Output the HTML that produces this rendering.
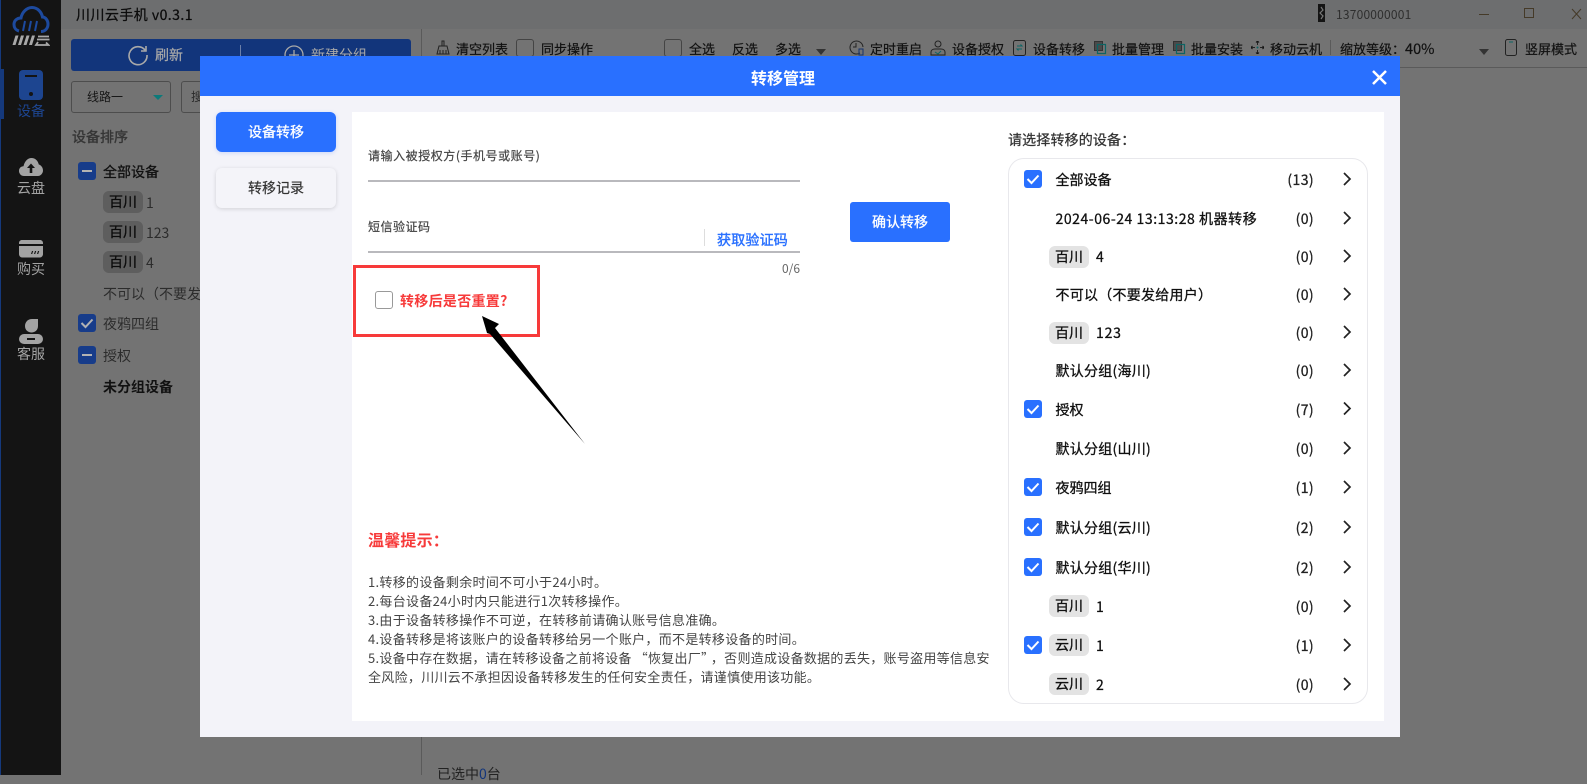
<!DOCTYPE html>
<html lang="zh"><head><meta charset="utf-8"><title>转移管理</title>
<style>
*{box-sizing:border-box}
html,body{margin:0;padding:0}
body{width:1587px;height:775px;overflow:hidden;position:relative;background:#737373;font-family:"Noto Sans CJK SC","Liberation Sans",sans-serif;font-size:14px;color:#111}
.a{position:absolute}
.t{position:absolute;white-space:nowrap;height:20px;line-height:20px}
.c{text-align:center}
.cb{position:absolute;width:18px;height:18px;border-radius:3px;background:#2970ff}
.cb svg{display:block}
.dcb{background:#173c8a}
.tag{position:absolute;width:40px;height:22px;line-height:22px;border-radius:6px;text-align:center;white-space:nowrap}
.tb{font-size:13px;color:#111;-webkit-text-stroke:.2px #111}
.box{position:absolute;width:18px;height:18px;border:1px solid #444;border-radius:3px}
.m{font-size:14px;color:#111;-webkit-text-stroke:.3px #111}
.r{letter-spacing:.25px}
.n{position:absolute;right:273px;white-space:nowrap;height:20px;line-height:20px;color:#222;letter-spacing:.4px;-webkit-text-stroke:.3px #222}
.h{position:absolute;left:368px;font-size:13px;height:19px;line-height:19px;color:#444;white-space:nowrap;letter-spacing:.3px}
.l{font-size:12px;color:#444;letter-spacing:.5px;-webkit-text-stroke:.2px #444}
</style></head><body>

<!-- top bar -->
<div class="a" style="left:61px;top:0;width:1526px;height:29px;background:#6d6e6f"></div>
<div class="t" style="left:76px;top:5px;font-size:14px;color:#0c0c0c;letter-spacing:.45px;-webkit-text-stroke:.25px #0c0c0c">川川云手机 v0.3.1</div>
<svg class="a" style="left:1318px;top:4px" width="7" height="18"><rect width="7" height="18" fill="#141414"/><path d="M3 3L5 6L2 9L5 12L3 15" stroke="#777" stroke-width="1.200" fill="none"/></svg>
<div class="t" style="left:1336px;top:5px;font-size:12px;color:#2e2e2e;letter-spacing:.2px">13700000001</div>
<svg class="a" style="left:1470px;top:0" width="117" height="26" fill="none" stroke="#453a28" stroke-width="1"><path d="M9 14.500H19M54.500 8.500H63.500V17.500H54.500ZM102 9L111 19M111 9L102 19"/></svg>

<!-- sidebar -->
<div class="a" style="left:0;top:0;width:61px;height:775px;background:#141414"></div>
<div class="a" style="left:0;top:0;width:1px;height:775px;background:#15397c"></div>
<div class="a" style="left:0;top:69px;width:4px;height:50px;background:#15397c"></div>
<svg class="a" style="left:12px;top:5px" width="38" height="42" fill="none">
<path d="M7 26C3 25 2 21.500 2 19.500C2 15.500 5 13 9 13C10 7 15 2.500 20 2.500C25.500 2.500 29.500 7 30.500 12C33.500 12 36 15.500 36 19C36 23.500 33 26.500 29 26.500" stroke="#1d4a9e" stroke-width="3"/>
<path d="M11 26L13 16M17 26L19 16M23 26L25 16" stroke="#1d4a9e" stroke-width="2"/>
<path d="M0.500 40L3.500 30.500H6.500L3.500 40ZM6 40L9 30.500H12L9 40ZM11.500 40L14.500 30.500H17.500L14.500 40ZM17 40L20 30.500H23L20 40Z" fill="#a8a8a8"/>
<path d="M26 31.500H37M25 34.500H37.500M26 37L24 40H36.500L34 37.500" stroke="#a8a8a8" stroke-width="1.800"/>
</svg>
<div class="a" style="left:19px;top:70px;width:24px;height:30px;background:#1d4590;border-radius:4px"></div>
<div class="a" style="left:25px;top:75px;width:12px;height:2px;background:#141414"></div>
<div class="a" style="left:29px;top:92px;width:4px;height:4px;border-radius:50%;background:#141414"></div>
<div class="t c" style="left:0;width:62px;top:101px;color:#1d4590;font-size:14px">设备</div>
<svg class="a" style="left:19px;top:158px" width="24" height="18"><path d="M5 18C2 18 0 15.500 0 13C0 10 2 8.500 4.500 8.300C5.500 3.500 8.500 0 12.500 0C16.500 0 19 3 19.800 6.500C22 7 24 9.500 24 12.500C24 15.500 21.500 18 19 18Z" fill="#a3a3a3"/><path d="M12 5.500L8 10H10.700V15H13.300V10H16Z" fill="#141414"/></svg>
<div class="t c" style="left:0;width:62px;top:178px;color:#a3a3a3">云盘</div>
<svg class="a" style="left:19px;top:240px" width="24" height="18"><path d="M3 0H21C22.700 0 24 1.300 24 3V4H0V3C0 1.300 1.300 0 3 0ZM0 6H24V14C24 16 22.500 17.500 21 17.500H3C1.500 17.500 0 16 0 14Z" fill="#a3a3a3"/><path d="M12 14L13 11H14.200L13.200 14ZM15 14L16 11H17.200L16.200 14ZM18 14L19 11H20.200L19.200 14Z" fill="#141414"/></svg>
<div class="t c" style="left:0;width:62px;top:259px;color:#a3a3a3">购买</div>
<svg class="a" style="left:19px;top:319px" width="24" height="25"><path d="M19 0V7C19 11 16 13.500 12.500 13.500C9 13.500 6 11 6 7C6 3 9 0 13 0Z" fill="#a3a3a3"/><rect y="15" width="24" height="10" rx="5" fill="#a3a3a3"/><rect x="8" y="19" width="8" height="2" fill="#141414"/></svg>
<div class="t c" style="left:0;width:62px;top:344px;color:#a3a3a3">客服</div>

<!-- left panel -->
<div class="a" style="left:71px;top:39px;width:340px;height:32px;background:#12357b;border-radius:3px"></div>
<svg class="a" style="left:127px;top:44px" width="22" height="22" fill="none" stroke="#a9a9a9" stroke-width="1.600"><path d="M18 6A9 9 0 1 0 20 11M19 2V7H14"/></svg>
<div class="t" style="left:155px;top:45px;color:#a9a9a9;-webkit-text-stroke:.2px #a9a9a9">刷新</div>
<div class="a" style="left:240px;top:45px;width:1px;height:20px;background:#6b7fa8"></div>
<svg class="a" style="left:284px;top:45px" width="20" height="20" fill="none" stroke="#a9a9a9" stroke-width="1.300"><circle cx="10" cy="10" r="9"/><path d="M5 10H15M10 5V15"/></svg>
<div class="t" style="left:311px;top:45px;color:#a9a9a9">新建分组</div>

<div class="a" style="left:71px;top:81px;width:100px;height:32px;border:1px solid #4d4d4d;border-radius:3px"></div>
<div class="t" style="left:87px;top:87px;font-size:12px;color:#161616">线路一</div>
<div class="a" style="left:153px;top:95px;width:0;height:0;border:5px solid transparent;border-top:5px solid #0d7a7a;border-bottom:0"></div>
<div class="a" style="left:181px;top:81px;width:60px;height:32px;border:1px solid #4d4d4d;border-radius:3px"></div>
<div class="t" style="left:191px;top:87px;font-size:12px;color:#2a2a2a">搜</div>

<div class="t" style="left:72px;top:127px;color:#363636;-webkit-text-stroke:.4px #363636">设备排序</div>
<div class="cb dcb" style="left:78px;top:162px"><svg width="18" height="18"><path d="M4 9H14" stroke="#b3b3b3" stroke-width="2"/></svg></div>
<div class="t" style="left:103px;top:162px;color:#111;-webkit-text-stroke:.3px #111">全部设备</div>
<div class="tag" style="left:103px;top:191px;background:#5e5e5e;color:#0c0c0c;-webkit-text-stroke:.3px #0c0c0c">百川</div><div class="t" style="left:146px;top:193px;color:#2c2c2c">1</div>
<div class="tag" style="left:103px;top:221px;background:#5e5e5e;color:#0c0c0c;-webkit-text-stroke:.3px #0c0c0c">百川</div><div class="t" style="left:146px;top:223px;color:#2c2c2c">123</div>
<div class="tag" style="left:103px;top:251px;background:#5e5e5e;color:#0c0c0c;-webkit-text-stroke:.3px #0c0c0c">百川</div><div class="t" style="left:146px;top:253px;color:#2c2c2c">4</div>
<div class="t" style="left:103px;top:284px;color:#2c2c2c">不可以（不要发给用户）</div>
<div class="cb dcb" style="left:78px;top:314px"><svg width="18" height="18" fill="none"><path d="M3.500 9L7.500 13L14.500 5.500" stroke="#b3b3b3" stroke-width="2"/></svg></div>
<div class="t" style="left:103px;top:314px;color:#2c2c2c">夜鸦四组</div>
<div class="cb dcb" style="left:78px;top:346px"><svg width="18" height="18"><path d="M4 9H14" stroke="#b3b3b3" stroke-width="2"/></svg></div>
<div class="t" style="left:103px;top:346px;color:#2c2c2c">授权</div>
<div class="t" style="left:103px;top:377px;color:#111;font-weight:700;font-size:14px">未分组设备</div>

<!-- toolbar -->
<div class="a" style="left:421px;top:29px;width:1px;height:746px;background:#5a5a5a"></div>
<div class="a" style="left:421px;top:67px;width:1166px;height:1px;background:#5a5a5a"></div>
<svg class="a" style="left:436px;top:40px" width="14" height="16" fill="none" stroke="#222" stroke-width="1"><path d="M6 1H8V6H6ZM3 6H11L13 14H1ZM4 10V14M7 10V14M10 10V14"/></svg>
<div class="t tb" style="left:456px;top:39px">清空列表</div>
<div class="box" style="left:516px;top:39px"></div>
<div class="t tb" style="left:541px;top:39px">同步操作</div>
<div class="box" style="left:664px;top:39px"></div>
<div class="t tb" style="left:689px;top:39px">全选</div>
<div class="t tb" style="left:732px;top:39px">反选</div>
<div class="t tb" style="left:775px;top:39px">多选</div>
<div class="a" style="left:816px;top:49px;width:0;height:0;border:5px solid transparent;border-top:6px solid #333;border-bottom:0"></div>
<svg class="a" style="left:849px;top:40px" width="16" height="16" fill="none" stroke="#222"><path d="M11 13A6.500 6.500 0 1 1 14 7M7 3V7H4"/><rect x="10" y="9" width="4" height="6" stroke="#14336e"/></svg>
<div class="t tb" style="left:870px;top:39px">定时重启</div>
<svg class="a" style="left:930px;top:40px" width="16" height="16" fill="none" stroke="#222"><circle cx="8" cy="4" r="3"/><path d="M1 15V12C1 10 3 9 5 9H11C13 9 15 10 15 12V15Z"/><path d="M5 12L8 14L11 11" stroke="#0d6464"/></svg>
<div class="t tb" style="left:952px;top:39px">设备授权</div>
<svg class="a" style="left:1013px;top:40px" width="14" height="16" fill="none" stroke="#222"><rect x=".5" y=".5" width="12" height="15" rx="2"/><path d="M4 6H9L7.500 4.500M9 9H4L5.500 10.500" stroke="#0d6464"/></svg>
<div class="t tb" style="left:1033px;top:39px">设备转移</div>
<svg class="a" style="left:1094px;top:41px" width="13" height="14" fill="none"><rect x=".5" y=".5" width="8" height="9" stroke="#333" fill="#4a4a4a"/><rect x="3.500" y="3.500" width="8" height="9" stroke="#0d6464" stroke-width="1.200"/></svg>
<div class="t tb" style="left:1112px;top:39px">批量管理</div>
<svg class="a" style="left:1173px;top:41px" width="13" height="14" fill="none"><rect x=".5" y=".5" width="8" height="9" stroke="#333" fill="#4a4a4a"/><rect x="3.500" y="3.500" width="8" height="9" stroke="#0d6464" stroke-width="1.200"/></svg>
<div class="t tb" style="left:1191px;top:39px">批量安装</div>
<svg class="a" style="left:1251px;top:41px" width="13" height="13" fill="none" stroke="#111"><path d="M6.500 0V4M6.500 9V13M0 6.500H4M9 6.500H13" stroke="#222"/><path d="M5 1.500L6.500 0L8 1.500M5 11.500L6.500 13L8 11.500M1.500 5L0 6.500L1.500 8M11.500 5L13 6.500L11.500 8"/><circle cx="6.500" cy="6.500" r="1" fill="#0d6464" stroke="none"/></svg>
<div class="t tb" style="left:1270px;top:39px">移动云机</div>
<div class="a" style="left:1330px;top:40px;width:1px;height:15px;background:#5a5a5a"></div>
<div class="t tb" style="left:1340px;top:39px">缩放等级：<span style="font-size:14.500px">40%</span></div>
<div class="a" style="left:1479px;top:49px;width:0;height:0;border:5px solid transparent;border-top:6px solid #333;border-bottom:0"></div>
<svg class="a" style="left:1505px;top:39px" width="12" height="17" fill="none" stroke="#222"><rect x=".5" y=".5" width="11" height="16" rx="2"/><path d="M4 3H8" stroke="#0d6464"/></svg>
<div class="t tb" style="left:1525px;top:39px">竖屏模式</div>
<div class="t" style="left:437px;top:764px;font-size:14px;color:#222">已选中<span style="color:#12357b">0</span>台</div>

<!-- modal -->
<div class="a" style="left:200px;top:56px;width:1200px;height:681px;background:#f3f3f9"></div>
<div class="a" style="left:200px;top:56px;width:1200px;height:40px;background:#2970ff"></div>
<div class="t c" style="left:200px;width:1166px;top:67px;font-size:16px;font-weight:700;color:#fff">转移管理</div>
<svg class="a" style="left:1371px;top:69px" width="17" height="17" fill="none" stroke="#fff" stroke-width="2.500"><path d="M2 2L15 15M15 2L2 15"/></svg>
<div class="a c" style="left:216px;top:112px;width:120px;height:40px;line-height:40px;background:#2970ff;border-radius:6px;color:#fff;-webkit-text-stroke:.3px #fff;box-shadow:0 1px 4px rgba(40,100,255,.2)">设备转移</div>
<div class="a c" style="left:216px;top:168px;width:120px;height:40px;line-height:40px;background:#f4f4f9;border-radius:6px;color:#333;-webkit-text-stroke:.2px #333;box-shadow:0 1px 4px rgba(0,0,0,.14)">转移记录</div>
<div class="a" style="left:352px;top:112px;width:1032px;height:609px;background:#fff"></div>

<!-- form -->
<div class="t l" style="left:368px;top:146px;letter-spacing:.55px">请输入被授权方(手机号或账号)</div>
<div class="a" style="left:368px;top:180px;width:432px;height:2px;background:#b9b9bd"></div>
<div class="t l" style="left:368px;top:217px">短信验证码</div>
<div class="a" style="left:704px;top:229px;width:1px;height:17px;background:#ddd"></div>
<div class="t" style="left:717px;top:230px;font-size:14px;letter-spacing:.2px;color:#2970ff;-webkit-text-stroke:.4px #2970ff">获取验证码</div>
<div class="a" style="left:368px;top:251px;width:432px;height:2px;background:#b9b9bd"></div>
<div class="t" style="right:787px;top:259px;font-size:12px;color:#666">0/6</div>
<div class="a c" style="left:850px;top:202px;width:100px;height:40px;line-height:40px;background:#2970ff;border-radius:3px;color:#fff;-webkit-text-stroke:.3px #fff">确认转移</div>
<div class="a" style="left:353px;top:265px;width:187px;height:72px;border:3px solid #f73a3a"></div>
<div class="a" style="left:375px;top:291px;width:18px;height:18px;border:1px solid #999;border-radius:3px;background:#fff"></div>
<div class="t" style="left:400px;top:291px;font-size:14px;font-weight:700;letter-spacing:.3px;color:#f73a3a">转移后是否重置?</div>
<svg class="a" style="left:470px;top:305px" width="125" height="150"><path d="M12 11L29 19L25 23L115 139L20 29L17 28Z" fill="#000"/></svg>

<!-- tips -->
<div class="t" style="left:368px;top:529px;font-size:16px;font-weight:700;color:#f73a3a;letter-spacing:.2px">温馨提示：</div>
<div class="h" style="top:572px">1.转移的设备剩余时间不可小于24小时。</div>
<div class="h" style="top:591px">2.每台设备24小时内只能进行1次转移操作。</div>
<div class="h" style="top:610px">3.由于设备转移操作不可逆，在转移前请确认账号信息准确。</div>
<div class="h" style="top:629px">4.设备转移是将该账户的设备转移给另一个账户，而不是转移设备的时间。</div>
<div class="h" style="top:648px;letter-spacing:.28px">5.设备中存在数据，请在转移设备之前将设备<span style="margin-left:3px">“</span>恢复出厂<span style="margin-right:3px">”</span>，否则造成设备数据的丢失，账号盗用等信息安</div>
<div class="h" style="top:667px">全风险，川川云不承担因设备转移发生的任何安全责任，请谨慎使用该功能。</div>

<!-- device list -->
<div class="t" style="left:1008px;top:130px;color:#333;letter-spacing:.15px;-webkit-text-stroke:.25px #333">请选择转移的设备：</div>
<div class="a" style="left:1008px;top:158px;width:360px;height:546px;border:1px solid #e8e8ec;border-radius:16px"></div>

<div class="cb" style="left:1024px;top:170px"><svg width="18" height="18" fill="none"><path d="M3.500 9L7.500 13L14.500 5.500" stroke="#fff" stroke-width="2"/></svg></div>
<div class="t m" style="left:1055.500px;top:170px">全部设备</div><div class="n" style="top:170px">(13)</div>
<div class="t m" style="left:1055.500px;top:209px;letter-spacing:.55px">2024-06-24 13:13:28 机器转移</div><div class="n" style="top:209px">(0)</div>
<div class="tag m" style="left:1049px;top:246px;background:#e3e3e3">百川</div><div class="t m" style="left:1096px;top:247px">4</div><div class="n" style="top:247px">(0)</div>
<div class="t m r" style="left:1055.500px;top:285px">不可以（不要发给用户）</div><div class="n" style="top:285px">(0)</div>
<div class="tag m" style="left:1049px;top:322px;background:#e3e3e3">百川</div><div class="t m" style="left:1096px;top:323px;letter-spacing:.8px">123</div><div class="n" style="top:323px">(0)</div>
<div class="t m r" style="left:1055.500px;top:361px">默认分组(海川)</div><div class="n" style="top:361px">(0)</div>
<div class="cb" style="left:1024px;top:400px"><svg width="18" height="18" fill="none"><path d="M3.500 9L7.500 13L14.500 5.500" stroke="#fff" stroke-width="2"/></svg></div>
<div class="t m" style="left:1055.500px;top:400px">授权</div><div class="n" style="top:400px">(7)</div>
<div class="t m r" style="left:1055.500px;top:439px">默认分组(山川)</div><div class="n" style="top:439px">(0)</div>
<div class="cb" style="left:1024px;top:478px"><svg width="18" height="18" fill="none"><path d="M3.500 9L7.500 13L14.500 5.500" stroke="#fff" stroke-width="2"/></svg></div>
<div class="t m" style="left:1055.500px;top:478px">夜鸦四组</div><div class="n" style="top:478px">(1)</div>
<div class="cb" style="left:1024px;top:518px"><svg width="18" height="18" fill="none"><path d="M3.500 9L7.500 13L14.500 5.500" stroke="#fff" stroke-width="2"/></svg></div>
<div class="t m r" style="left:1055.500px;top:518px">默认分组(云川)</div><div class="n" style="top:518px">(2)</div>
<div class="cb" style="left:1024px;top:558px"><svg width="18" height="18" fill="none"><path d="M3.500 9L7.500 13L14.500 5.500" stroke="#fff" stroke-width="2"/></svg></div>
<div class="t m r" style="left:1055.500px;top:558px">默认分组(华川)</div><div class="n" style="top:558px">(2)</div>
<div class="tag m" style="left:1049px;top:595px;background:#e3e3e3">百川</div><div class="t m" style="left:1096px;top:597px">1</div><div class="n" style="top:597px">(0)</div>
<div class="cb" style="left:1024px;top:636px"><svg width="18" height="18" fill="none"><path d="M3.500 9L7.500 13L14.500 5.500" stroke="#fff" stroke-width="2"/></svg></div>
<div class="tag m" style="left:1049px;top:634px;background:#e3e3e3">云川</div><div class="t m" style="left:1096px;top:636px">1</div><div class="n" style="top:636px">(1)</div>
<div class="tag m" style="left:1049px;top:673px;background:#e3e3e3">云川</div><div class="t m" style="left:1096px;top:675px">2</div><div class="n" style="top:675px">(0)</div>

<svg class="a" style="left:1340px;top:160px" width="16" height="540" fill="none" stroke="#222" stroke-width="1.700">
<path d="M4 13L10 19L4 25M4 52L10 58L4 64M4 90L10 96L4 102M4 128L10 134L4 140M4 166L10 172L4 178M4 204L10 210L4 216M4 242.500L10 248.500L4 254.500M4 282L10 288L4 294M4 321L10 327L4 333M4 361L10 367L4 373M4 401L10 407L4 413M4 440L10 446L4 452M4 479L10 485L4 491M4 518L10 524L4 530"/>
</svg>
</body></html>
